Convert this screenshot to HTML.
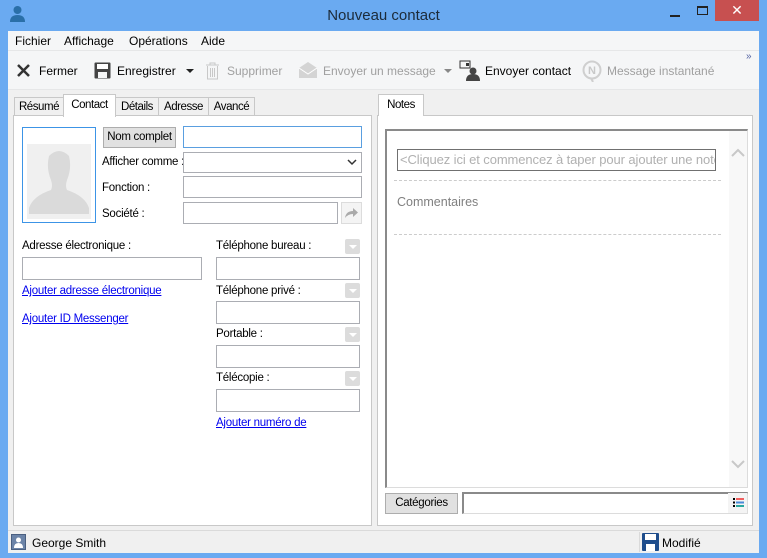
<!DOCTYPE html>
<html><head><meta charset="utf-8"><style>
*{margin:0;padding:0;box-sizing:border-box}
body{width:767px;height:558px;background:#6aaaf1;font-family:"Liberation Sans",sans-serif;font-size:12px;color:#000;position:relative;overflow:hidden}
.a{position:absolute}
.t{position:absolute;white-space:nowrap}
.f{font-size:11.5px;letter-spacing:-0.25px;margin-top:1px}
.inp{position:absolute;background:#fff;border:1px solid #abadb3}
.lnk{position:absolute;color:#0000ee;text-decoration:underline;white-space:nowrap;font-size:11.5px;letter-spacing:-0.25px;margin-top:1px}
.dd{position:absolute;width:15px;height:15px;background:#dcdcdc;border-radius:2px}
.dd:after{content:"";position:absolute;left:4px;top:6px;border-left:4px solid transparent;border-right:4px solid transparent;border-top:4px solid #fff}
.btn{position:absolute;background:#e1e1e1;border:1px solid #adadad;text-align:center;font-size:11.5px;letter-spacing:-0.3px;white-space:nowrap}
.tab{position:absolute;background:#f0f0f0;border:1px solid #c8c8c8;border-bottom:none;text-align:center;height:19px;line-height:18px;top:97px;font-size:11.5px;letter-spacing:-0.45px;white-space:nowrap}
.g{color:#a0a0a0}
</style></head><body>
<svg class="a" style="left:9px;top:5px" width="17" height="18" viewBox="0 0 17 18"><circle cx="8.5" cy="5" r="4" fill="#2a6fa8"/><path d="M1 17 Q1 10 8.5 10 Q16 10 16 17Z" fill="#2a6fa8"/></svg>
<div class="t" style="left:0;width:767px;text-align:center;top:7px;font-size:15px;color:#1c2b3a">Nouveau contact</div>
<div class="a" style="left:670px;top:15px;width:10px;height:2px;background:#222"></div>
<div class="a" style="left:697px;top:6px;width:11px;height:9px;border:1px solid #222;border-top-width:2px"></div>
<div class="a" style="left:715px;top:0;width:44px;height:21px;background:#c75050;color:#fff;text-align:center;font-size:14px;line-height:21px">✕</div>
<div class="a" style="left:8px;top:31px;width:751px;height:522px;background:#f0f0f0"></div>
<div class="a" style="left:8px;top:31px;width:751px;height:19px;background:#f5f6f7"></div>
<div class="t" style="left:15px;top:34px">Fichier</div>
<div class="t" style="left:64px;top:34px">Affichage</div>
<div class="t" style="left:129px;top:34px">Opérations</div>
<div class="t" style="left:201px;top:34px">Aide</div>
<div class="a" style="left:8px;top:50px;width:751px;height:40px;background:#f5f6f7;border-top:1px solid #e6e7e8;border-bottom:1px solid #e6e7e8"></div>
<svg class="a" style="left:16px;top:63px" width="15" height="15"><path d="M2 2L13 13M13 2L2 13" stroke="#333" stroke-width="2.5"/></svg>
<div class="t" style="left:39px;top:64px">Fermer</div>
<svg class="a" style="left:94px;top:62px" width="17" height="17"><rect x="0.5" y="0.5" width="16" height="16" rx="1" fill="#444"/><rect x="3" y="2" width="11" height="5" fill="#fff"/><rect x="4" y="10" width="9" height="6" fill="#f5f6f7"/></svg>
<div class="t" style="left:117px;top:64px">Enregistrer</div>
<div class="a" style="left:186px;top:69px;border-left:4px solid transparent;border-right:4px solid transparent;border-top:4px solid #222"></div>
<svg class="a" style="left:205px;top:62px" width="15" height="18"><path d="M1 3H14M5 3V1H10V3M2.5 4V17H12.5V4M5.5 6V15M7.5 6V15M9.5 6V15" stroke="#c8c8c8" fill="none"/></svg>
<div class="t g" style="left:227px;top:64px">Supprimer</div>
<svg class="a" style="left:298px;top:61px" width="20" height="18"><path d="M1 7L10 1L19 7V17H1Z" fill="#d4d4d4"/><path d="M1 7L10 13L19 7" stroke="#fff" fill="none"/></svg>
<div class="t g" style="left:323px;top:64px">Envoyer un message</div>
<div class="a" style="left:444px;top:69px;border-left:4px solid transparent;border-right:4px solid transparent;border-top:4px solid #888"></div>
<svg class="a" style="left:459px;top:60px" width="22" height="22"><rect x="1" y="1" width="10" height="7" fill="none" stroke="#333"/><rect x="7" y="3" width="3" height="3" fill="#333"/><circle cx="14" cy="11" r="3.5" fill="#444"/><path d="M7 21Q7 14 14 14Q21 14 21 21Z" fill="#444"/></svg>
<div class="t" style="left:485px;top:64px">Envoyer contact</div>
<svg class="a" style="left:581px;top:60px" width="22" height="22"><circle cx="11" cy="10" r="8.5" fill="none" stroke="#cfcfcf" stroke-width="2"/><text x="7" y="14" font-size="11" font-family="Liberation Sans" font-weight="bold" fill="#c8c8c8">N</text><path d="M10 18L12 22" stroke="#cfcfcf" stroke-width="2"/></svg>
<div class="t g" style="left:607px;top:64px">Message instantané</div>
<div class="t" style="left:746px;top:51px;font-size:10px;color:#5060a0">»</div>
<div class="tab" style="left:14px;width:50px">Résumé</div>
<div class="tab" style="left:115px;width:44px">Détails</div>
<div class="tab" style="left:158px;width:51px">Adresse</div>
<div class="tab" style="left:208px;width:47px">Avancé</div>
<div class="a" style="left:13px;top:115px;width:359px;height:411px;background:#fff;border:1px solid #c8c8c8"></div>
<div class="tab" style="left:63px;width:53px;top:94px;height:23px;background:#fff;line-height:20px">Contact</div>
<div class="a" style="left:22px;top:127px;width:74px;height:96px;border:1px solid #3c94e6;background:#fff"></div>
<div class="a" style="left:27px;top:144px;width:64px;height:75px;background:#f0f0f0"></div>
<svg class="a" style="left:27px;top:148px" width="64" height="70"><path d="M22 8Q32 -2 42 8Q45 20 40 32Q38 38 40 42Q58 48 62 60V66H2V60Q6 48 24 42Q26 38 24 32Q19 20 22 8Z" fill="#dadada"/></svg>
<div class="btn" style="left:103px;top:127px;width:73px;height:21px;line-height:19px">Nom complet</div>
<div class="inp" style="left:183px;top:126px;width:179px;height:22px;border-color:#5a9fe0"></div>
<div class="t f" style="left:102px;top:155px">Afficher comme :</div>
<div class="inp" style="left:183px;top:152px;width:179px;height:21px"></div>
<svg class="a" style="left:347px;top:158px" width="10" height="8"><path d="M1 2L5 6L9 2" stroke="#333" stroke-width="1.5" fill="none"/></svg>
<div class="t f" style="left:102px;top:181px">Fonction :</div>
<div class="inp" style="left:183px;top:176px;width:179px;height:22px"></div>
<div class="t f" style="left:102px;top:207px">Société :</div>
<div class="inp" style="left:183px;top:202px;width:155px;height:22px"></div>
<div class="a" style="left:341px;top:202px;width:21px;height:22px;background:#f4f4f4;border:1px solid #dcdcdc"></div>
<svg class="a" style="left:344px;top:206px" width="15" height="13"><path d="M1 12Q2 5 9 5V2L14 6.5L9 11V8Q4 8 1 12Z" fill="#aaa"/></svg>
<div class="t f" style="left:22px;top:239px">Adresse électronique :</div>
<div class="inp" style="left:22px;top:257px;width:180px;height:23px"></div>
<div class="lnk" style="left:22px;top:284px">Ajouter adresse électronique</div>
<div class="lnk" style="left:22px;top:312px">Ajouter ID Messenger</div>
<div class="t f" style="left:216px;top:239px">Téléphone bureau :</div>
<div class="dd" style="left:345px;top:239px"></div>
<div class="inp" style="left:216px;top:257px;width:144px;height:23px"></div>
<div class="t f" style="left:216px;top:284px">Téléphone privé :</div>
<div class="dd" style="left:345px;top:283px"></div>
<div class="inp" style="left:216px;top:301px;width:144px;height:23px"></div>
<div class="t f" style="left:216px;top:327px">Portable :</div>
<div class="dd" style="left:345px;top:327px"></div>
<div class="inp" style="left:216px;top:345px;width:144px;height:23px"></div>
<div class="t f" style="left:216px;top:371px">Télécopie :</div>
<div class="dd" style="left:345px;top:371px"></div>
<div class="inp" style="left:216px;top:389px;width:144px;height:23px"></div>
<div class="lnk" style="left:216px;top:416px">Ajouter numéro de </div>
<div class="a" style="left:377px;top:115px;width:376px;height:411px;background:#fff;border:1px solid #c8c8c8"></div>
<div class="tab" style="left:378px;width:46px;top:94px;height:22px;background:#fff;line-height:20px">Notes</div>
<div class="a" style="left:385px;top:129px;width:363px;height:359px;background:#fff;border:1px solid #dcdcdc;border-left:2px solid #8a8a8a;border-top:2px solid #8a8a8a"></div>
<div class="a" style="left:729px;top:131px;width:18px;height:356px;background:#f8f8f8"></div>
<svg class="a" style="left:731px;top:148px" width="14" height="9"><path d="M1 8L7 2L13 8" stroke="#c8c8c8" stroke-width="2" fill="none"/></svg>
<svg class="a" style="left:731px;top:460px" width="14" height="9"><path d="M1 1L7 7L13 1" stroke="#c8c8c8" stroke-width="2" fill="none"/></svg>
<div class="a" style="left:397px;top:149px;width:319px;height:22px;border:1px solid #707070;overflow:hidden;color:#b0b0b0;font-size:13px;line-height:19px;padding-left:2px;white-space:nowrap;letter-spacing:-0.1px">&lt;Cliquez ici et commencez à taper pour ajouter une note</div>
<div class="a" style="left:394px;top:180px;width:327px;border-top:1px dashed #ccc"></div>
<div class="t" style="left:397px;top:195px;color:#808080;font-size:12.5px">Commentaires</div>
<div class="a" style="left:394px;top:234px;width:327px;border-top:1px dashed #ccc"></div>
<div class="btn" style="left:385px;top:493px;width:73px;height:21px;line-height:19px">Catégories</div>
<div class="a" style="left:462px;top:492px;width:286px;height:22px;background:#fff;border:1px solid #dcdcdc;border-left:2px solid #8a8a8a;border-top:2px solid #8a8a8a"></div>
<div class="a" style="left:728px;top:493px;width:19px;height:20px;background:#f4f4f4"></div>
<svg class="a" style="left:733px;top:498px" width="11" height="9"><rect x="0" y="0" width="2" height="2" fill="#000"/><rect x="0" y="3.5" width="2" height="2" fill="#000"/><rect x="0" y="7" width="2" height="2" fill="#000"/><rect x="3" y="0" width="8" height="2" fill="#f06060"/><rect x="3" y="3.5" width="8" height="2" fill="#4a8ad8"/><rect x="3" y="7" width="8" height="2" fill="#2aa8a0"/></svg>
<div class="a" style="left:8px;top:530px;width:751px;border-top:1px solid #dadada"></div>
<div class="a" style="left:639px;top:532px;height:20px;border-left:1px solid #dadada"></div>
<svg class="a" style="left:11px;top:534px" width="16" height="16"><rect x="0.5" y="0.5" width="14" height="15" fill="#6c84a8" stroke="#4a5f80"/><circle cx="7.5" cy="6" r="2.5" fill="#fff"/><path d="M3 14Q3 9 7.5 9Q12 9 12 14Z" fill="#fff"/></svg>
<div class="t" style="left:32px;top:536px">George Smith</div>
<svg class="a" style="left:642px;top:533px" width="17" height="18"><rect x="0" y="0" width="17" height="18" rx="1" fill="#1e4d8c"/><rect x="3" y="1" width="11" height="6" fill="#fff"/><rect x="4" y="11" width="9" height="7" fill="#fff"/></svg>
<div class="t" style="left:662px;top:536px">Modifié</div>
</body></html>
